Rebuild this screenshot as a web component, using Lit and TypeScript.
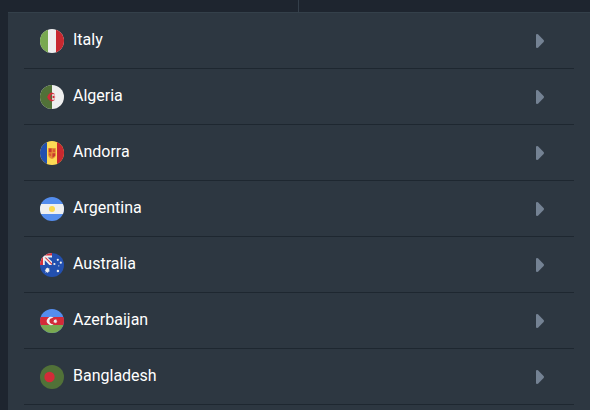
import { LitElement, html, css, svg, SVGTemplateResult } from "lit";
import { customElement } from "lit/decorators.js";

interface Country {
  name: string;
  flag: SVGTemplateResult;
}

const countries: Country[] = [
  {
    name: "Italy",
    flag: svg`
      <rect width="24" height="24" fill="#efefef" />
      <rect width="8" height="24" fill="#79a850" />
      <rect x="16" width="8" height="24" fill="#c8282f" />`,
  },
  {
    name: "Algeria",
    flag: svg`
      <rect width="24" height="24" fill="#efefef" />
      <rect width="12" height="24" fill="#517138" />
      <path d="M14.6 9.2A4 4 0 1 0 14.6 14.8A3.1 3.1 0 1 1 14.6 9.2Z" fill="#d32b38" stroke="#d32b38" stroke-width=".4" />
      <path d="M15.6 12l-1.3.5.1 1.4-1-1-1.4.4.8-1.3-.8-1.3 1.4.4 1-1-.1 1.4Z" fill="#d32b38" />`,
  },
  {
    name: "Andorra",
    flag: svg`
      <rect width="24" height="24" fill="#fdda55" />
      <rect width="7" height="24" fill="#2350af" />
      <rect x="17" width="7" height="24" fill="#c8282f" />
      <path d="M8.2 7h7.6v7q0 2.4-3.8 4-3.8-1.6-3.8-4Z" fill="#e58e38" />
      <path d="M8.8 7.6h2.8v3.6H8.8ZM12.4 12.2h2.8v2.6l-2.8 2Z" fill="#c9382f" />
      <path d="M12.8 8.2h2.4v2.8h-2.4ZM8.9 12.4h2.3v3l-2.3-1.4Z" fill="#d9582f" />`,
  },
  {
    name: "Argentina",
    flag: svg`
      <rect width="24" height="24" fill="#548ded" />
      <rect y="7" width="24" height="10" fill="#efefef" />
      <circle cx="12" cy="12" r="3" fill="#fbd94e" />`,
  },
  {
    name: "Australia",
    flag: svg`
      <rect width="24" height="24" fill="#2350af" />
      <rect width="12" height="12" fill="#efefef" />
      <path d="M0 0h12v2.6H3V12H0Z" fill="#d7323b" />
      <path d="M7.6 4.4H12v4.2ZM4.8 7.2V12h4.6Z" fill="#2350af" />
      <path d="M4.6 4.6h1.4L12 10.6V12Z" fill="#d7323b" />
      <path d="M7.2 14.2l.7 1.6 1.8-.4-.9 1.5 1.2 1.3-1.8.2-.1 1.8-1.3-1.2-1.6.8.7-1.7-1.3-1.2 1.8-.2Z" fill="#efefef" />
      <circle cx="7.4" cy="17" r="1.9" fill="#efefef" />
      <g fill="#efefef">
        <circle cx="17.8" cy="6.8" r="1.1" />
        <circle cx="14.4" cy="11" r="1.1" />
        <circle cx="20.8" cy="9.7" r="1.1" />
        <circle cx="18.8" cy="12.8" r=".6" />
        <circle cx="17.9" cy="18" r="1.2" />
      </g>`,
  },
  {
    name: "Azerbaijan",
    flag: svg`
      <rect width="24" height="24" fill="#548ded" />
      <rect y="8" width="24" height="8" fill="#d32b38" />
      <rect y="16" width="24" height="8" fill="#79a850" />
      <path d="M13.6 9.1A4 4 0 1 0 13.6 14.9A3.1 3.1 0 1 1 13.6 9.1Z" fill="#efefef" />
      <path d="M15.3 10l.5 1 1.1-.4-.4 1.1 1 .5-1 .5.4 1.1-1.1-.4-.5 1-.5-1-1.1.4.4-1.1-1-.5 1-.5-.4-1.1 1.1.4Z" fill="#efefef" />`,
  },
  {
    name: "Bangladesh",
    flag: svg`
      <rect width="24" height="24" fill="#517138" />
      <circle cx="9.5" cy="12" r="5.2" fill="#d32b38" />`,
  },
];

@customElement("app-root")
export class AppRoot extends LitElement {
  static styles = css`
    :host {
      display: flex;
      flex-direction: column;
      box-sizing: border-box;
      min-height: 100vh;
      padding-left: 8px;
      background: #1e252f;
      font-family: Roboto, "Liberation Sans", sans-serif;
    }
    .tabs {
      display: grid;
      grid-template-columns: 1fr 1fr;
      height: 12px;
    }
    .tab:first-child {
      border-right: 1px solid #343f4a;
    }
    .panel {
      flex: 1;
      padding: 0 16px;
      background: #2d3741;
      border-top: 1px solid #34404a;
    }
    .list {
      margin: 0;
      padding: 0;
      list-style: none;
    }
    .item {
      border-bottom: 1px solid #1e2730;
    }
    .row {
      display: flex;
      align-items: center;
      gap: 9px;
      box-sizing: border-box;
      width: 100%;
      height: 55px;
      padding: 0 30px 0 16px;
      border: 0;
      background: none;
      color: #ffffff;
      font: 400 16px/24px Roboto, "Liberation Sans", sans-serif;
      text-align: left;
      cursor: pointer;
    }
    .flag {
      flex: none;
      width: 24px;
      height: 24px;
      border-radius: 50%;
    }
    .name {
      flex: 1;
      padding-bottom: 1px;
    }
    .arrow {
      flex: none;
      width: 8px;
      height: 14px;
      fill: #748293;
    }
  `;

  render() {
    return html`
      <div class="tabs"><div class="tab"></div><div class="tab"></div></div>
      <main class="panel">
        <ul class="list">
          ${countries.map(
            (country) => html`
              <li class="item">
                <button class="row" type="button">
                  <svg class="flag" viewBox="0 0 24 24" aria-hidden="true">${country.flag}</svg>
                  <span class="name">${country.name}</span>
                  <svg class="arrow" viewBox="0 0 8 14" aria-hidden="true">
                    <path d="M0 1Q0 0 1 0L2 .3L7.6 6Q8.4 7 7.6 8L2 13.7L1 14Q0 14 0 13Z" />
                  </svg>
                </button>
              </li>
            `
          )}
        </ul>
      </main>
    `;
  }
}
